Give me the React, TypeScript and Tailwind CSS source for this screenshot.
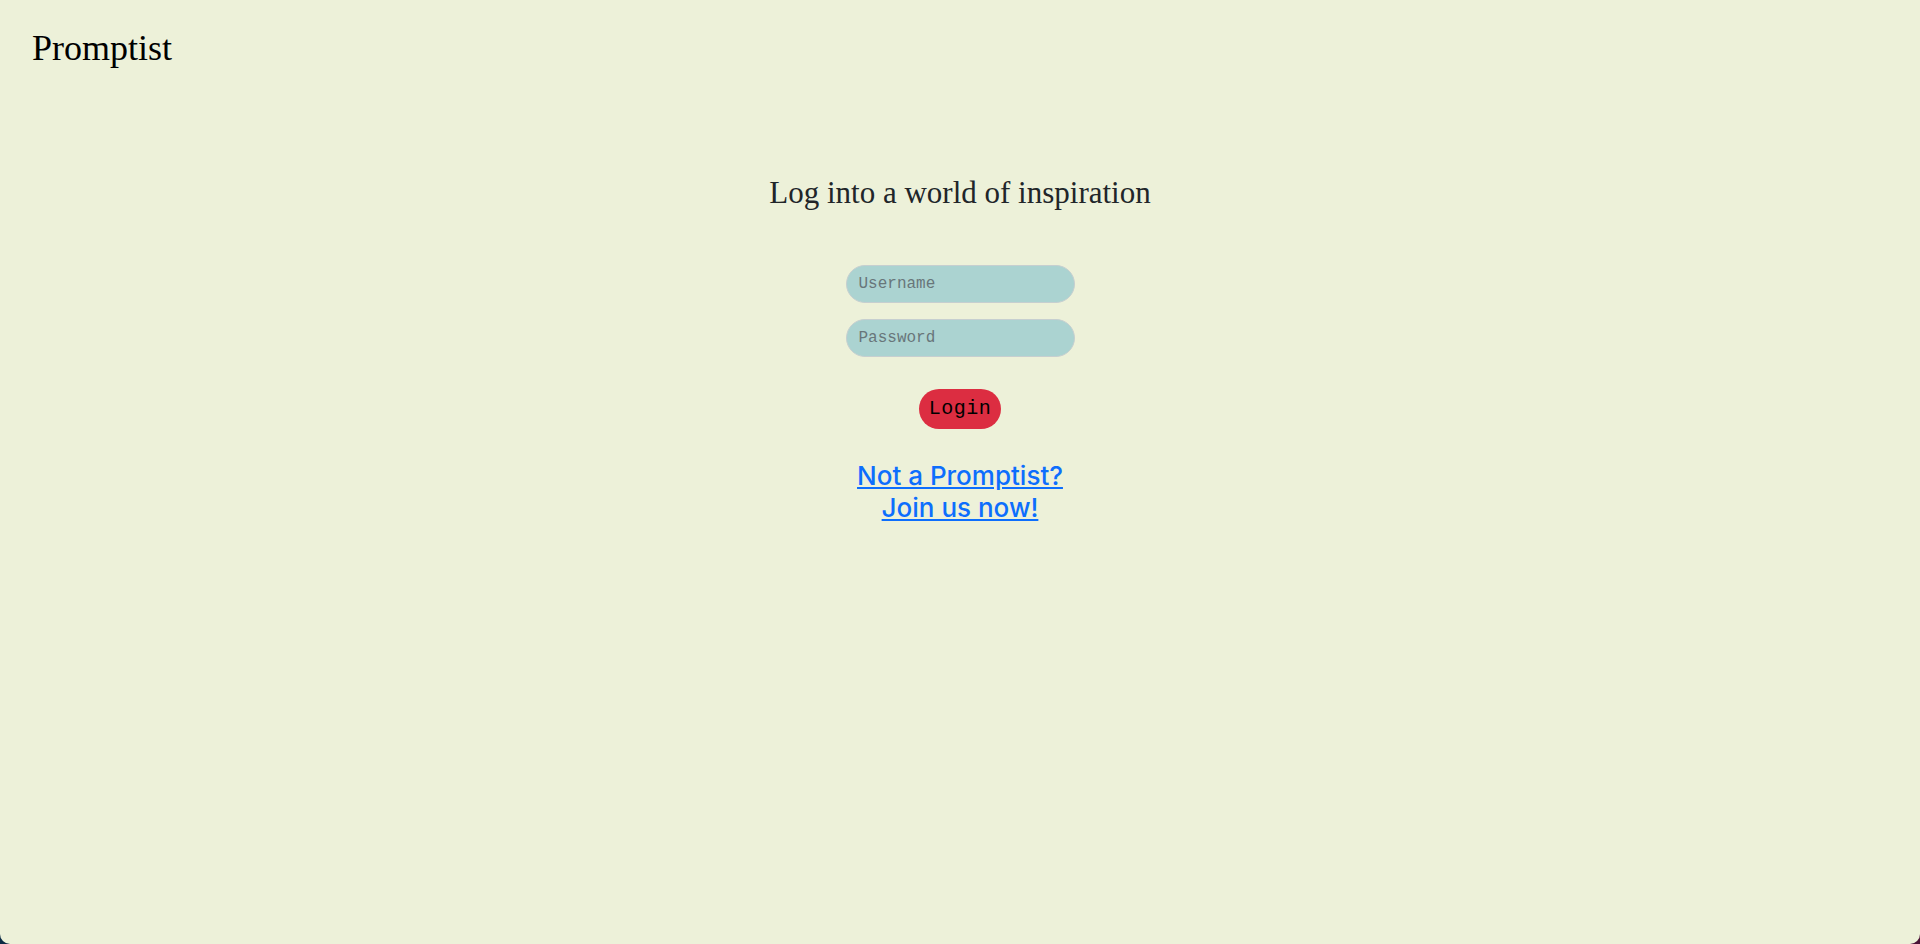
const LoginPage = () => {
  return (
    <div className="h-screen w-full bg-gradient-to-r from-[#0c2a44] to-[#4b1236]">
      <div className="h-full w-full bg-[#edf1d9] rounded-b-[10px] flex flex-col">
        {/* Navbar */}
        <nav className="px-8 pt-7">
          <span className="text-[36px] leading-[41px] text-black font-['Liberation_Serif',serif]">
            Promptist
          </span>
        </nav>

        {/* Login form */}
        <main className="flex flex-col items-center">
          <h1 className="mt-[105px] text-[31px] leading-[37px] text-[#212529] font-['Liberation_Serif',serif]">
            Log into a world of inspiration
          </h1>

          <form className="mt-[54px] flex flex-col items-center gap-4" onSubmit={(e) => e.preventDefault()}>
            <input
              type="text"
              placeholder="Username"
              className="w-[229px] h-[38px] px-3 rounded-full bg-[#abd3d1] border border-[#c6cfd0] text-[16px] font-['Liberation_Mono',monospace] text-[#333] placeholder:text-[#68767a] outline-none"
            />
            <input
              type="password"
              placeholder="Password"
              className="w-[229px] h-[38px] px-3 rounded-full bg-[#abd3d1] border border-[#c6cfd0] text-[16px] font-['Liberation_Mono',monospace] text-[#333] placeholder:text-[#68767a] outline-none"
            />
            <button
              type="submit"
              className="mt-4 h-[40px] px-[10px] rounded-full bg-[#dc2d41] text-black text-[20px] tracking-[0.5px] font-['Liberation_Mono',monospace]"
            >
              Login
            </button>
          </form>

          <a
            href="#"
            className="mt-[31px] text-center text-[26px] leading-[32px] font-medium text-[#0d6efd] underline font-['Inter',sans-serif]"
          >
            Not a Promptist?
            <br />
            Join us now!
          </a>
        </main>
      </div>
    </div>
  );
};

export default function App() {
  return <LoginPage />;
}
